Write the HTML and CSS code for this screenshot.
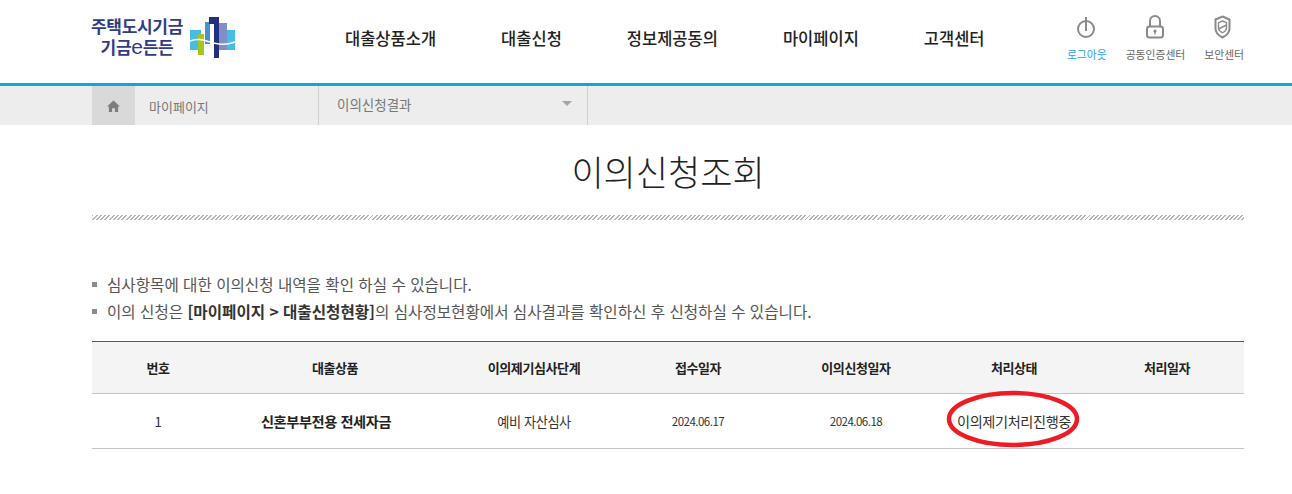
FILE: index.html
```html
<!DOCTYPE html>
<html lang="ko">
<head>
<meta charset="utf-8">
<title>이의신청조회</title>
<link rel="stylesheet" href="styles.css">
</head>
<body>
<header class="header">
  <div class="wrap header-in">
    <a class="logo">
      <span class="logo-text"><span>주택도시기금</span><span class="logo-l2">기금<i>e</i>든든</span></span>
      <svg class="logo-mark" width="46" height="41" viewBox="0 0 46 41">
        <rect x="0" y="13" width="11" height="20" fill="#45bde6"/>
        <rect x="15" y="5" width="5" height="22" fill="#4d8fc9"/>
        <rect x="8" y="17" width="6" height="21" fill="#a6c521"/>
        <rect x="19" y="0" width="10" height="7" fill="#232f80"/>
        <rect x="24" y="0" width="5" height="41" fill="#232f80"/>
        <rect x="29" y="6" width="8" height="27" fill="#7f8fc8"/>
        <rect x="37" y="13" width="8" height="20" fill="#45bde6"/>
        <path d="M0 24c8-3 13-1 20 1s14 4 25 0" fill="none" stroke="#fff" stroke-width="1.500"/>
      </svg>
    </a>
    <nav class="gnb">
      <a>대출상품소개</a><a>대출신청</a><a>정보제공동의</a><a>마이페이지</a><a>고객센터</a>
    </nav>
    <div class="util">
      <a class="util-item on">
        <svg width="22" height="24" viewBox="0 0 22 24" fill="none" stroke="#8a8a8a" stroke-width="2"><circle cx="10" cy="14" r="8"/><path d="M10 2v14"/></svg>
        <span>로그아웃</span>
      </a>
      <a class="util-item">
        <svg width="22" height="24" viewBox="0 0 22 24" fill="none" stroke="#8a8a8a" stroke-width="2"><rect x="3" y="11.500" width="16" height="11" rx="2.500"/><path d="M6 11.500V6a5 5 0 0 1 10 0v5.500"/><circle cx="11" cy="16" r="1.600" fill="#8a8a8a" stroke="none"/><path d="M11 16v3.500" stroke-width="1.400"/></svg>
        <span>공동인증센터</span>
      </a>
      <a class="util-item">
        <svg width="22" height="24" viewBox="0 0 22 24" fill="none" stroke="#8a8a8a" stroke-width="2"><path d="M9.500 1.500l7 3v9c0 4-3 7-7 9-4-2-7-5-7-9v-9z"/><path d="M9.500 6l4 1.700v5c0 2-2 4-4 5-2-1-4-3-4-5v-5z" stroke-width="1.400"/><path d="M5.500 14l8-4" stroke-width="1.400"/></svg>
        <span>보안센터</span>
      </a>
    </div>
  </div>
</header>
<div class="crumb">
  <div class="wrap crumb-in">
    <a class="crumb-home"><svg width="13" height="12" viewBox="0 0 14 13"><path d="M7 .5L0 7h2v6h3.500V9h3v4H12V7h2z" fill="#7d7d7d"/></svg></a>
    <a class="crumb-a">마이페이지</a>
    <a class="crumb-b"><span>이의신청결과</span><i class="caret"></i></a>
  </div>
</div>
<main class="wrap">
  <h1 class="title">이의신청조회</h1>
  <div class="hatch"></div>
  <ul class="notes">
    <li>심사항목에 대한 이의신청 내역을 확인 하실 수 있습니다.</li>
    <li>이의 신청은 <b>[마이페이지 &gt; 대출신청현황]</b>의 심사정보현황에서 심사결과를 확인하신 후 신청하실 수 있습니다.</li>
  </ul>
  <table class="grid">
    <colgroup>
      <col class="c1"><col class="c2"><col class="c3"><col class="c4"><col class="c5"><col class="c6"><col class="c7">
    </colgroup>
    <thead>
      <tr><th>번호</th><th>대출상품</th><th>이의제기심사단계</th><th>접수일자</th><th>이의신청일자</th><th>처리상태</th><th>처리일자</th></tr>
    </thead>
    <tbody>
      <tr>
        <td>1</td><td class="prod">신혼부부전용 전세자금</td><td>예비 자산심사</td><td class="date">2024.06.17</td><td class="date">2024.06.18</td>
        <td class="status"><span>이의제기처리진행중</span>
          <svg class="circle" width="138" height="60" viewBox="0 0 138 60"><ellipse cx="69" cy="30" rx="64" ry="26" fill="none" stroke="#ed1c24" stroke-width="4.500"/></svg>
        </td>
        <td></td>
      </tr>
    </tbody>
  </table>
</main>
</body>
</html>
```
FILE: styles.css
```css
* { box-sizing: border-box; }
html, body { margin: 0; padding: 0; }
body {
  background: #fff;
  color: #333;
  font-family: "Noto Sans CJK KR", "Noto Sans", sans-serif;
  font-size: 14px;
  height: 494px;
  overflow: hidden;
}
.wrap { width: 1152px; margin: 0 0 0 92px; }
.header { height: 86px; border-bottom: 3px solid #12a5dc; }
.header-in { display: flex; align-items: flex-start; height: 83px; }
.logo { display: flex; align-items: flex-start; width: 253px; padding-top: 15px; }
.logo-text {
  display: flex; flex-direction: column; align-items: center;
  color: #2f3d86; font-size: 17px; font-weight: 700; line-height: 21px;
  width: 92px; margin-left: -1px; letter-spacing: -.3px; white-space: nowrap;
}
.logo-l2 i { font-style: normal; font-family: "Liberation Sans", sans-serif; font-size: 21px; font-weight: 400; }
.logo-mark { margin-left: 7px; margin-top: 2px; }
.gnb { display: flex; gap: 65px; width: 700px; padding-top: 27px; }
.gnb a { color: #222; font-size: 16.500px; font-weight: 500; line-height: 22px; white-space: nowrap; }
.util { display: flex; margin-left: auto; padding-top: 15px; gap: 19px; }
.util-item { display: flex; flex-direction: column; align-items: center; gap: 8px; color: #666; font-size: 10.800px; line-height: 14px; }
.util-item.on { color: #2aa3e6; }
.crumb { background: #ededed; height: 39px; }
.crumb-in { display: flex; height: 39px; }
.crumb-home { display: flex; align-items: center; justify-content: center; width: 43px; background: #d9d9d9; }
.crumb-a { width: 183px; padding: 11px 0 0 14px; color: #777; font-size: 13px; line-height: 20px; }
.crumb-b {
  display: flex; justify-content: space-between; width: 270px; padding: 8px 15px 0 18px;
  border-left: 1px solid #d0d0d0; border-right: 1px solid #d0d0d0;
  color: #777; font-size: 13.500px; line-height: 20px;
}
.caret { width: 0; height: 0; margin-top: 7px; border: 5px solid transparent; border-top: 5px solid #a5a5a5; border-bottom: 0; }
.title { margin: 0; padding-top: 21px; height: 90px; text-align: center; color: #222; font-size: 35px; font-weight: 300; line-height: 50px; }
.hatch {
  height: 5px;
  background: repeating-linear-gradient(135deg, #b5b5b5 0, #b5b5b5 1.400px, #fff 1.400px, #fff 3px);
}
.notes { list-style: none; margin: 0; padding: 51px 0 0; }
.notes li {
  position: relative; padding-left: 15px; height: 27px;
  color: #555; font-size: 15.600px; line-height: 27px;
}
.notes li::before { content: ""; position: absolute; left: 0; top: 11px; width: 5px; height: 5px; background: #8b8b8b; }
.notes b { color: #333; font-weight: 700; }
.grid { width: 100%; margin-top: 16px; border-collapse: collapse; table-layout: fixed; border-top: 1px solid #555; }
.c1 { width: 132px; } .c2 { width: 222px; } .c3 { width: 176px; } .c4 { width: 152px; }
.c5 { width: 164px; } .c6 { width: 152px; } .c7 { width: 154px; }
.grid th {
  height: 52px; padding: 0; background: #f4f4f4; border-bottom: 1px solid #c4c4c4;
  color: #222; font-size: 13px; font-weight: 700; letter-spacing: -.4px;
}
.grid td {
  height: 55px; padding: 0; border-bottom: 1px solid #c4c4c4; text-align: center;
  color: #333; font-size: 13.200px; letter-spacing: -.4px;
}
.grid td.prod { padding-right: 18px; color: #222; font-size: 14.200px; font-weight: 700; }
.grid td.date { font-size: 11.500px; letter-spacing: -.5px; }
.grid td.status { position: relative; color: #333; font-size: 14.200px; }
.circle { position: absolute; left: 6px; top: -5px; }
```
